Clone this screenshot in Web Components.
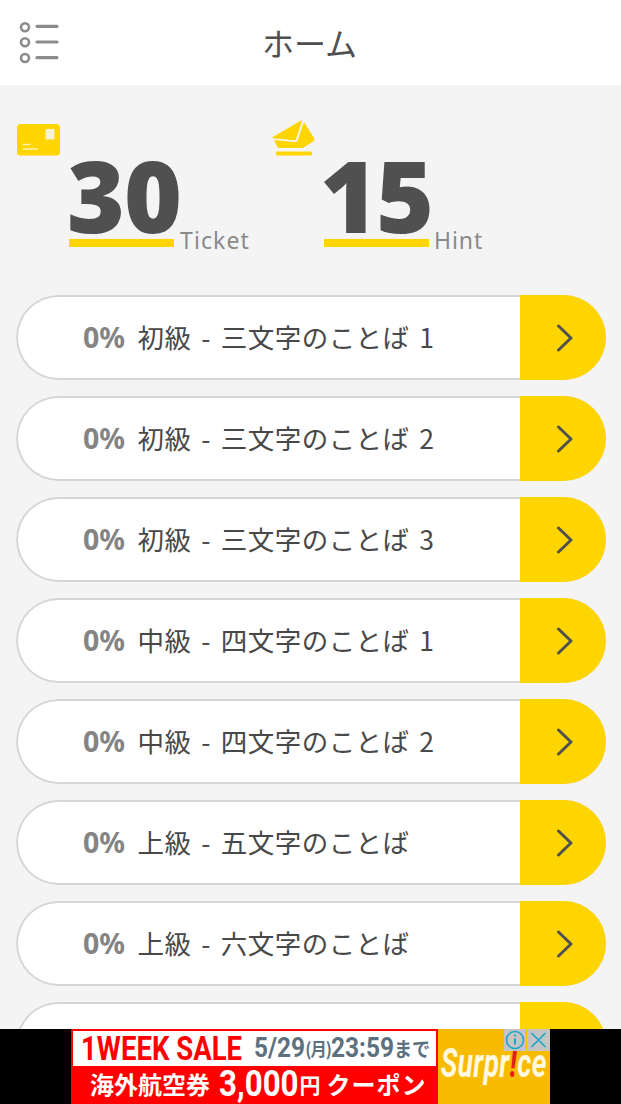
<!DOCTYPE html>
<html lang="ja"><head><meta charset="utf-8"><title>ホーム</title>
<style>
html,body{margin:0;padding:0;height:100%;overflow:hidden}
body{font-family:"Noto Sans","Noto Sans CJK JP",sans-serif;color:#505050}
</style></head><body>
<app-shell>
  <app-header slot="header" title="ホーム"></app-header>
  <stat-bar>
    <stat-item kind="ticket" value="30" label="Ticket"></stat-item>
    <stat-item kind="hint" value="15" label="Hint"></stat-item>
  </stat-bar>
  <level-item name="初級 - 三文字のことば 1"></level-item>
  <level-item name="初級 - 三文字のことば 2"></level-item>
  <level-item name="初級 - 三文字のことば 3"></level-item>
  <level-item name="中級 - 四文字のことば 1"></level-item>
  <level-item name="中級 - 四文字のことば 2"></level-item>
  <level-item name="上級 - 五文字のことば"></level-item>
  <level-item name="上級 - 六文字のことば"></level-item>
  <level-item></level-item>
  <ad-banner slot="ad"></ad-banner>
</app-shell>
<script>
function def(name, html){
  customElements.define(name, class extends HTMLElement{
    connectedCallback(){
      if(this.shadowRoot) return;
      const a=k=>this.getAttribute(k)||'';
      this.attachShadow({mode:'open'}).innerHTML=html(a);
    }
  });
}
const cjk='"Noto Sans CJK JP","Noto Sans",sans-serif';
const nar='"Roboto",sans-serif';
def('app-shell',()=>`<style>
:host{display:flex;flex-direction:column;width:621px;height:1104px;background:#f4f4f4;overflow:hidden}
.main{flex:1;min-height:0;overflow:hidden;display:flex;flex-direction:column;gap:16px;padding:0 15px 0 15.500px}
</style><slot name="header"></slot><div class="main"><slot></slot></div><slot name="ad"></slot>`);
def('app-header',a=>`<style>
:host{display:flex;flex:none;height:85px;background:#fff;align-items:center;justify-content:center;position:relative}
h1{margin:0;font:400 32px/1 ${cjk};color:#505050;position:relative;top:-1px;left:-1px}
svg{position:absolute;left:19px;top:22px}
</style><svg width="40" height="42" viewBox="0 0 40 42" fill="none" stroke="#8c8c8c">
<circle cx="6" cy="5.300" r="4" stroke-width="2.600"/><circle cx="6" cy="20.300" r="4" stroke-width="2.600"/><circle cx="6" cy="36" r="4" stroke-width="2.600"/>
<path d="M18 4.300h20M18 20h20M18 35.700h20" stroke-width="3.200" stroke-linecap="round"/></svg><h1>${a('title')}</h1>`);
def('stat-bar',()=>`<style>
:host{display:flex;flex:none;height:194px;padding:39px 0 0 .5px;box-sizing:border-box}
</style><slot></slot>`);
def('stat-item',a=>`<style>
:host{display:block;width:255px;flex:none;position:relative;padding:32px 0 0 53px;box-sizing:border-box;height:130px}
.ic{position:absolute;top:0;left:1px}
.row{display:flex;align-items:flex-end}
.num{font:900 99px/78px "Noto Sans",sans-serif;letter-spacing:-1px;color:#505050;border-bottom:8px solid #ffd500;height:91px;width:105px;flex:none;box-sizing:border-box;white-space:nowrap;text-indent:-2px}
.lab{font:400 23px/24px "Noto Sans",sans-serif;letter-spacing:1.100px;color:#8a8a8a;margin-left:6px;margin-bottom:-5px}
:host([kind=hint]) .num{text-indent:-4px;letter-spacing:-2px}
:host([kind=hint]) .lab{letter-spacing:.9px;margin-left:5px}
</style>${a('kind')==='ticket'?
`<svg class="ic" width="43" height="32" viewBox="0 0 43 32"><rect width="43" height="31.500" rx="3.500" fill="#ffd500"/><rect x="28.500" y="5" width="9" height="10.500" rx=".8" fill="#f7f1d6"/><path d="M5.500 20.500h8M5.500 25h15.500" stroke="#fff3b0" stroke-width="1.500"/></svg>`:
`<svg class="ic" style="left:1px;top:-4px" width="43" height="36" viewBox="0 0 43 36"><path d="M0 17.500 29 .5c.8-.3 1.300.2 1 1L24 19c-.4 1-1 1.300-2 1.200L1 18.300z" fill="#ffd500"/><path d="M32 2 42 18c.8 1.300.6 2.400-.6 3.200L31 28H6L2 20l20 2c2 .2 3-.5 3.700-2z" fill="#ffd500"/><rect x="4" y="31.500" width="36" height="4" rx="1" fill="#ffd500"/></svg>`}
<div class="row"><div class="num">${a('value')}</div><div class="lab">${a('label')}</div></div>`);
def('level-item',a=>`<style>
:host{display:flex;flex:none;height:85px;border-radius:42.500px;overflow:hidden;background:#fff;box-sizing:border-box;box-shadow:inset 0 0 0 2px #d6d6d6}
.t{flex:1;display:flex;align-items:center;padding:0 0 0 67.500px;font:400 26.500px/1 ${cjk};color:#484848;white-space:nowrap;letter-spacing:.45px;word-spacing:3.500px}
.p{font:700 28.500px/1 "Noto Sans",sans-serif;letter-spacing:0;color:#848484;margin-right:12.500px}
.b{flex:none;width:86px;background:#ffd500;display:flex;align-items:center;justify-content:center}
svg{margin-left:3px}
</style><div class="t">${a('name')?`<span class="p">0%</span><span>${a('name')}</span>`:''}</div>
<div class="b"><svg width="18" height="28" viewBox="0 0 18 28" fill="none"><path d="M2.500 2 15 14 2.500 26" stroke="#505050" stroke-width="3" stroke-linecap="round" stroke-linejoin="round"/></svg></div>`);
def('ad-banner',()=>`<style>
:host{display:flex;flex:none;height:75px;background:#000;justify-content:center;position:relative;z-index:1}
.ad{width:479px;height:75px;display:flex;position:relative}
.l{width:367px;flex:none;background:#f00;box-sizing:border-box;padding:2px;display:flex;flex-direction:column}
.w{height:35px;flex:none;background:#fff;display:flex;align-items:center;white-space:nowrap}
.sale{display:block;flex:none;font:700 34px/35px ${nar};color:#f00;transform:scaleX(.81);transform-origin:left center;margin-left:8px;width:214px;margin-right:-41px}
.dt{display:flex;align-items:center;flex:none;font:700 27px/35px ${nar};color:#5d7080;transform:scaleX(.905);transform-origin:left center;width:195px;margin-right:-22px}
.dt span{display:block;flex:none}
.dt .sm{font:700 18px/35px "Noto Sans CJK JP",sans-serif;letter-spacing:-1px}.dt .jp{font:700 20px/35px "Noto Sans CJK JP",sans-serif}
.r{flex:1;display:flex;align-items:center;white-space:nowrap;color:#fff;font:700 24px/36px ${cjk};padding-left:17px}
.r b{display:block;font:700 36px/36px ${nar};transform:scaleX(.87);transform-origin:left center;margin:0 -11px 0 9px}
.r s{text-decoration:none;font-size:21px;margin:0 6px 0 0}
.r .k{letter-spacing:1px}
.y{flex:1;min-width:0;background:#f9bb00;display:flex;align-items:flex-end;justify-content:center;padding-bottom:20px;box-sizing:border-box}
.s{display:block;font:italic 700 40px/1 ${nar};color:#fff9e0;transform:scaleX(.7);white-space:nowrap;letter-spacing:.5px}
.s em{color:#e0201c;font-style:italic}
.x{position:absolute;right:0;top:0;display:flex;gap:1px}
.x span{display:block;background:#c4c4c4;height:22px}
</style><div class="ad"><div class="l"><div class="w"><span class="sale">1WEEK SALE</span><div class="dt"><span>5/29</span><span class="sm">(月)</span><span>23:59</span><span class="jp">まで</span></div></div>
<div class="r"><span>海外航空券</span><b>3,000</b><s>円</s><span class="k">クーポン</span></div></div>
<div class="y"><span class="s">Surpr<em>!</em>ce</span></div>
<div class="x"><span style="width:22px"><svg width="22" height="22" viewBox="0 0 22 22" fill="none" stroke="#17a7c9" stroke-width="1.600"><circle cx="11" cy="11" r="8.500"/><path d="M11 9.500v6" stroke-width="2"/><circle cx="11" cy="6.500" r="1.100" fill="#17a7c9" stroke="none"/></svg></span><span style="width:23px"><svg width="23" height="22" viewBox="0 0 23 22" fill="none" stroke="#17a7c9" stroke-width="1.600"><path d="M4.500 4l14 14M18.500 4l-14 14"/></svg></span></div></div>`);
</script></body></html>
